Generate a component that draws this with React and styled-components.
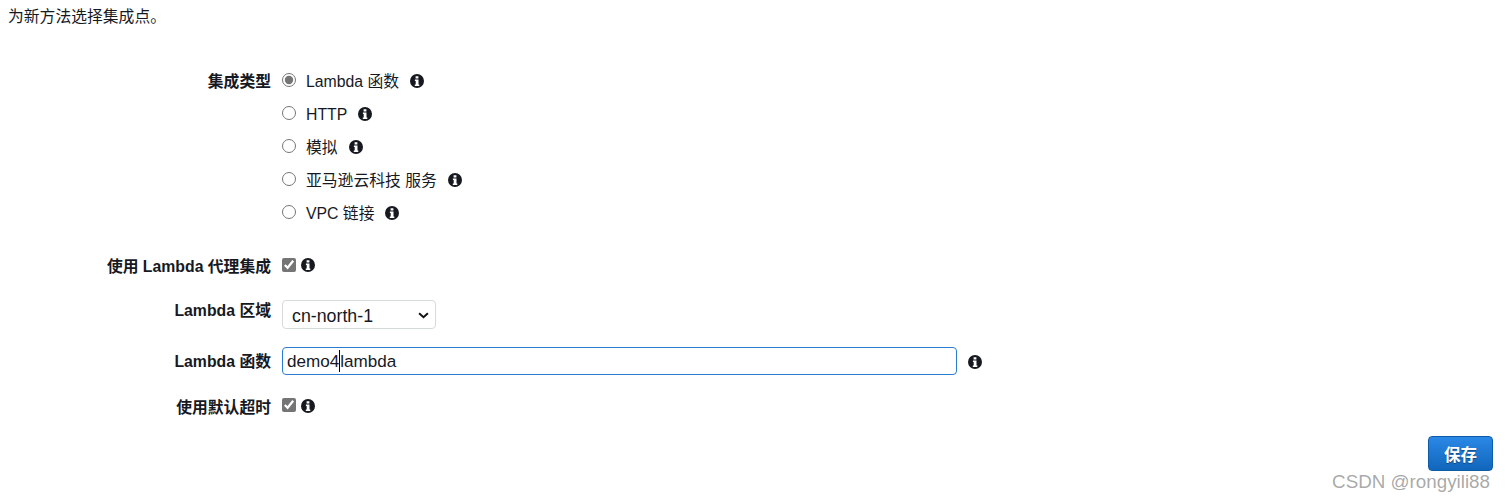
import styled, { createGlobalStyle } from "styled-components";

const OPTIONS = ["Lambda 函数", "HTTP", "模拟", "亚马逊云科技 服务", "VPC 链接"];

const InfoIcon = ({ className }) => (
    <svg className={className} viewBox="0 0 14 14" aria-hidden="true">
        <circle cx="7" cy="7" r="7" fill="#16191f" />
        <path
            fill="#fff"
            d="M5.6 2.2h2.8v2.3H5.6zM4.9 5.5h3.6v4.9h.8v1.5H4.8v-1.5h.9V7H4.9z"
        />
    </svg>
);

const App = () => {
    return (
        <Page>
            <GlobalStyle />
            <Intro>为新方法选择集成点。</Intro>
            <Form>
                <Row $top={30}>
                    <Label $pad={8}>集成类型</Label>
                    <Options>
                        {OPTIONS.map((option, i) => (
                            <Option key={option}>
                                <Radio name="type" defaultChecked={i === 0} />
                                <OptionText>{option}</OptionText>
                                <OptionIcon />
                            </Option>
                        ))}
                    </Options>
                </Row>
                <Row $top={26}>
                    <Label $pad={2}>使用 Lambda 代理集成</Label>
                    <Checkbox defaultChecked />
                    <CheckIcon $pad={3} />
                </Row>
                <Row $top={23}>
                    <Label $pad={1}>Lambda 区域</Label>
                    <SelectBox>
                        <Select defaultValue="cn-north-1">
                            <option>cn-north-1</option>
                        </Select>
                        <Chevron viewBox="0 0 10 6" aria-hidden="true">
                            <path d="M1 1l4 3.6L9 1" />
                        </Chevron>
                    </SelectBox>
                </Row>
                <Row $top={18}>
                    <Label $pad={5}>Lambda 函数</Label>
                    <Field>
                        demo4
                        <Caret />
                        lambda
                    </Field>
                    <FieldIcon />
                </Row>
                <Row $top={20}>
                    <Label $pad={3}>使用默认超时</Label>
                    <Checkbox defaultChecked />
                    <CheckIcon $pad={4} />
                </Row>
            </Form>
            <Footer>
                <SaveButton>保存</SaveButton>
            </Footer>
            <Watermark>CSDN @rongyili88</Watermark>
        </Page>
    );
};

export default App;

const GlobalStyle = createGlobalStyle`
    body {
        margin: 0;
        background: #fff;
    }
`;
const Page = styled.div`
    position: relative;
    box-sizing: border-box;
    width: 1505px;
    height: 501px;
    padding: 0 12px 0 8px;
    overflow: hidden;
    color: #16191f;
    font-family: "Liberation Sans", "Noto Sans CJK SC", sans-serif;
    font-size: 15.8px;
`;
const Intro = styled.div`
    height: 34px;
    line-height: 34px;
`;
const Form = styled.div`
    display: flex;
    flex-direction: column;
`;
const Row = styled.div`
    display: flex;
    align-items: flex-start;
    margin-top: ${(props) => props.$top}px;
`;
const Label = styled.div`
    width: 263px;
    margin-right: 11px;
    padding-top: ${(props) => props.$pad}px;
    line-height: 20px;
    text-align: right;
    font-weight: 700;
`;
const Options = styled.div`
    display: flex;
    flex-direction: column;
`;
const Option = styled.div`
    display: flex;
    align-items: center;
    height: 33px;
`;
const Radio = styled.input.attrs({ type: "radio" })`
    width: 14px;
    height: 14px;
    margin: -1px 10px 0 0;
    accent-color: #757575;
`;
const OptionText = styled.span`
    padding-top: 2px;
    line-height: 20px;
`;
const OptionIcon = styled(InfoIcon)`
    width: 14px;
    height: 14px;
    margin: 1px 0 0 11px;
`;
const Checkbox = styled.input.attrs({ type: "checkbox" })`
    width: 14px;
    height: 14px;
    margin: 3px 0 0;
    accent-color: #757575;
`;
const CheckIcon = styled(InfoIcon)`
    width: 14px;
    height: 14px;
    margin: ${(props) => props.$pad}px 0 0 5px;
`;
const SelectBox = styled.div`
    position: relative;
    width: 154px;
    height: 29px;
`;
const Select = styled.select`
    box-sizing: border-box;
    width: 100%;
    height: 100%;
    padding: 3px 0 0 9px;
    border: 1px solid #d5dbdb;
    border-radius: 4px;
    background: #fff;
    appearance: none;
    color: #16191f;
    font-family: inherit;
    font-size: 17.8px;
`;
const Chevron = styled.svg`
    position: absolute;
    top: 12px;
    right: 7px;
    width: 11px;
    height: 7px;
    fill: none;
    stroke: #111;
    stroke-width: 1.8;
    pointer-events: none;
`;
const Field = styled.div`
    box-sizing: border-box;
    display: flex;
    align-items: center;
    width: 675px;
    height: 28px;
    padding: 2px 4px 0;
    border: 1px solid #2b7cd3;
    border-radius: 4px;
    font-size: 17.1px;
`;
const Caret = styled.span`
    width: 1px;
    height: 22px;
    margin-top: -2px;
    background: #000;
`;
const FieldIcon = styled(InfoIcon)`
    width: 14px;
    height: 14px;
    margin: 8px 0 0 11px;
`;
const Footer = styled.div`
    display: flex;
    justify-content: flex-end;
    margin-top: 18px;
`;
const SaveButton = styled.button`
    width: 65px;
    height: 35px;
    border: 1px solid #0f5ba7;
    border-radius: 4px;
    background: linear-gradient(to bottom, #2b88e6, #1166bb);
    color: #fff;
    font-family: inherit;
    font-size: 16.5px;
    font-weight: 700;
    text-shadow: 0 1px 1px rgba(0, 0, 0, 0.4);
`;
const Watermark = styled.div`
    position: absolute;
    right: 15px;
    bottom: 8px;
    color: rgba(120, 120, 120, 0.65);
    font-family: "Liberation Sans", sans-serif;
    font-size: 18.8px;
    line-height: 22px;
`;
